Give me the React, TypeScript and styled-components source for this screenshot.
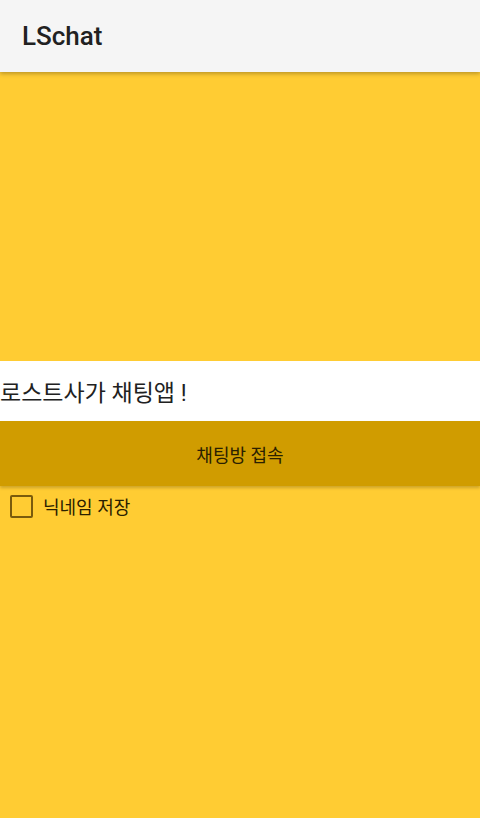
import React, { useState } from 'react'
import styled, { createGlobalStyle } from 'styled-components'

const GlobalStyle = createGlobalStyle`
  html, body {
    margin: 0;
    padding: 0;
    height: 100%;
    background: #ffcc33;
    font-family: Roboto, "Noto Sans CJK KR", sans-serif;
  }
  #root {
    height: 100%;
  }
`

const Page = styled.div`
  display: flex;
  flex-direction: column;
  height: 818px;
  background: #ffcc33;
`

const AppBar = styled.header`
  height: 72px;
  flex-shrink: 0;
  display: flex;
  align-items: center;
  padding: 0 22px;
  background: #f5f5f5;
  box-shadow: 0 2px 4px rgba(0, 0, 0, 0.25);
  position: relative;
  z-index: 1;
`

const Title = styled.h1`
  margin: 0;
  font-size: 26px;
  font-weight: 500;
  color: #212121;
`

const Spacer = styled.div`
  height: 289px;
  flex-shrink: 0;
`

const NameInput = styled.input`
  height: 60px;
  box-sizing: border-box;
  border: none;
  outline: none;
  padding: 0;
  margin: 0;
  width: 100%;
  background: #ffffff;
  font-family: Roboto, "Noto Sans CJK KR", sans-serif;
  font-size: 23px;
  color: #212121;
`

const JoinButton = styled.button`
  height: 65px;
  width: 100%;
  border: none;
  margin: 0;
  background: #d09c00;
  font-family: Roboto, "Noto Sans CJK KR", sans-serif;
  font-size: 18px;
  color: #2a2000;
  box-shadow: 0 2px 3px rgba(0, 0, 0, 0.2);
  position: relative;
`

const CheckRow = styled.label`
  display: flex;
  align-items: center;
  gap: 10px;
  padding: 7px 10px;
  font-size: 18px;
  color: #2a2000;
  cursor: pointer;
`

const Box = styled.span<{ checked: boolean }>`
  width: 23px;
  height: 23px;
  box-sizing: border-box;
  border: 2px solid #7a5b0c;
  border-radius: 2px;
  background: ${({ checked }) => (checked ? '#7a5b0c' : 'transparent')};
`

const HiddenCheck = styled.input`
  display: none;
`

const App = () => {
  const [nickname, setNickname] = useState('로스트사가 채팅앱 !')
  const [saveName, setSaveName] = useState(false)

  return (
    <Page>
      <GlobalStyle />
      <AppBar>
        <Title>LSchat</Title>
      </AppBar>
      <Spacer />
      <NameInput value={nickname} onChange={(e) => setNickname(e.target.value)} />
      <JoinButton>채팅방 접속</JoinButton>
      <CheckRow>
        <HiddenCheck
          type="checkbox"
          checked={saveName}
          onChange={(e) => setSaveName(e.target.checked)}
        />
        <Box checked={saveName} />
        닉네임 저장
      </CheckRow>
    </Page>
  )
}

export default App
